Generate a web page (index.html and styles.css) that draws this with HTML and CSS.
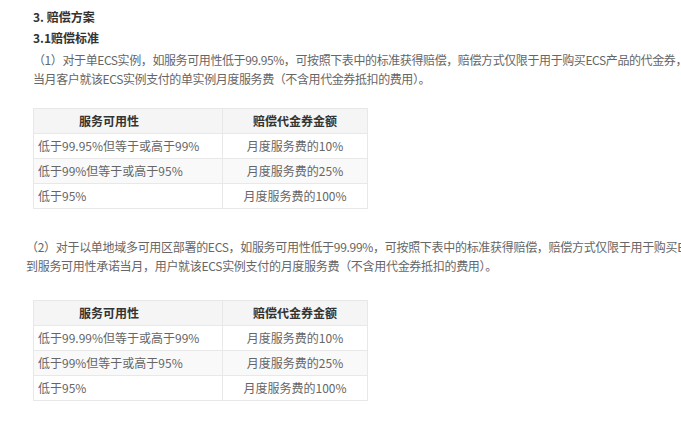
FILE: index.html
```html
<!DOCTYPE html>
<html lang="zh-CN">
<head>
<meta charset="utf-8">
<title>赔偿方案</title>
<link rel="stylesheet" href="styles.css">
</head>
<body>
<div class="page">
  <h3 class="h">3. 赔偿方案</h3>
  <h4 class="h h2">3.1赔偿标准</h4>
  <p class="para p1">（1）对于单ECS实例，如服务可用性低于99.95%，可按照下表中的标准获得赔偿，赔偿方式仅限于用于购买ECS产品的代金券，且赔偿总额不超过<br>当月客户就该ECS实例支付的单实例月度服务费（不含用代金券抵扣的费用）。</p>
  <table class="tbl t1">
    <colgroup><col class="w1"><col class="w2"></colgroup>
    <tr class="head"><th class="c1">服务可用性</th><th class="c2">赔偿代金券金额</th></tr>
    <tr><td class="c1">低于99.95%但等于或高于99%</td><td class="c2">月度服务费的10%</td></tr>
    <tr class="alt"><td class="c1">低于99%但等于或高于95%</td><td class="c2">月度服务费的25%</td></tr>
    <tr><td class="c1">低于95%</td><td class="c2">月度服务费的100%</td></tr>
  </table>
  <p class="para p2">（2）对于以单地域多可用区部署的ECS，如服务可用性低于99.99%，可按照下表中的标准获得赔偿，赔偿方式仅限于用于购买ECS产品的代金券，且赔偿总额不超过未达<br>到服务可用性承诺当月，用户就该ECS实例支付的月度服务费（不含用代金券抵扣的费用）。</p>
  <table class="tbl t2">
    <colgroup><col class="w1"><col class="w2"></colgroup>
    <tr class="head"><th class="c1">服务可用性</th><th class="c2">赔偿代金券金额</th></tr>
    <tr><td class="c1">低于99.99%但等于或高于99%</td><td class="c2">月度服务费的10%</td></tr>
    <tr class="alt"><td class="c1">低于99%但等于或高于95%</td><td class="c2">月度服务费的25%</td></tr>
    <tr><td class="c1">低于95%</td><td class="c2">月度服务费的100%</td></tr>
  </table>
</div>
</body>
</html>
```
FILE: styles.css
```css
html, body {
  margin: 0;
  padding: 0;
  background: #ffffff;
  overflow: hidden;
}
body {
  width: 681px;
  height: 424px;
  font-family: "Noto Sans CJK SC", "Noto Sans", sans-serif;
  font-size: 12px;
  color: #666666;
}
.page {
  padding: 7px 0 0 26px;
}
.h {
  margin: 0 0 1px 7px;
  font-size: 12px;
  line-height: 20px;
  font-weight: bold;
  color: #333333;
}
.para {
  white-space: nowrap;
  line-height: 19px;
  margin: 0;
}
.p1 {
  margin: 1.5px 0 0 7px;
  letter-spacing: -0.4px;
}
.p2 {
  margin: 28px 0 0 0;
  letter-spacing: -0.3px;
}
.tbl {
  border-collapse: collapse;
  margin-left: 7px;
  width: 334px;
  table-layout: fixed;
}
.tbl .w1 { width: 189px; }
.tbl .w2 { width: 145px; }
.t1 { margin-top: 20.5px; }
.t2 { margin-top: 24.5px; }
.tbl th, .tbl td {
  border: 1px solid #e8e8e8;
  height: 24px;
  padding: 0;
  font-size: 12px;
  line-height: 16px;
  vertical-align: middle;
  white-space: nowrap;
}
.tbl .c1 { text-align: left; padding-left: 4px; }
.tbl .c2 { text-align: center; }
.head th {
  background: #f5f5f5;
  color: #333333;
  font-weight: bold;
}
.head th.c1 { padding-left: 45px; }
.alt td { background: #f9f9f9; }
```
